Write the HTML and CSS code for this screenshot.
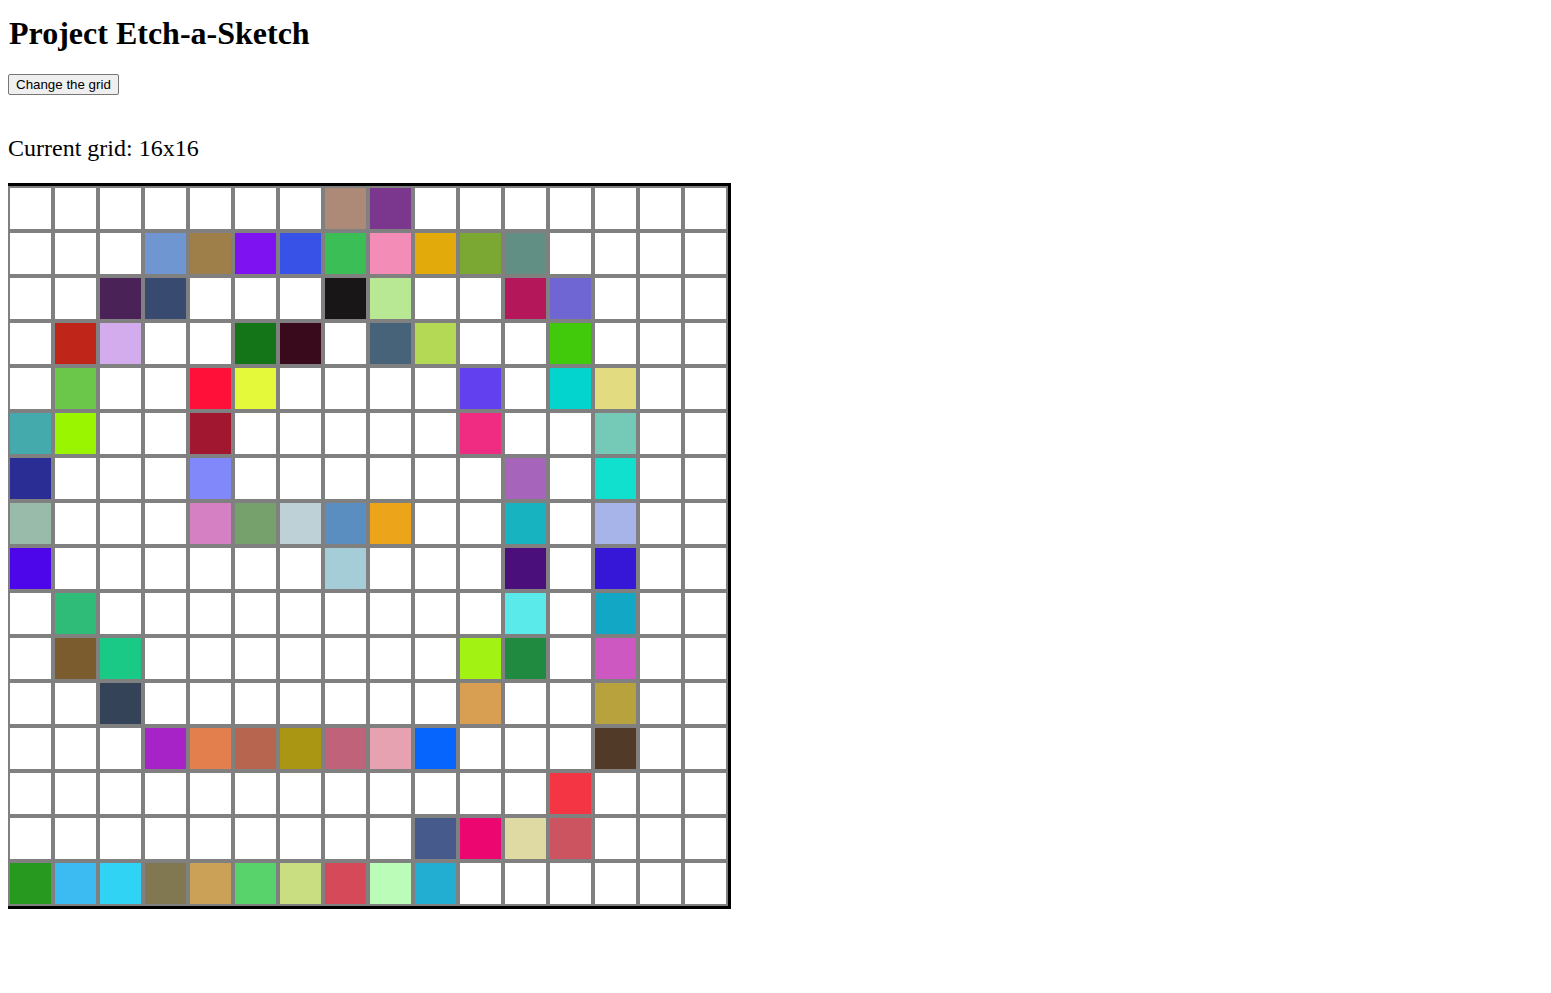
FILE: index.html
```html
<!DOCTYPE html>
<html>
<head>
<meta charset="utf-8">
<title>Etch-a-Sketch</title>
<link rel="stylesheet" href="styles.css">
</head>
<body>
<h1 class="title">Project Etch-a-Sketch</h1>
<div class="controls"><button class="change-btn">Change the grid</button></div>
<p class="status">Current grid: 16x16</p>
<div class="grid">
<div class="cell"></div><div class="cell"></div><div class="cell"></div><div class="cell"></div><div class="cell"></div><div class="cell"></div><div class="cell"></div><div class="cell" style="background:#ad8a78"></div><div class="cell" style="background:#7b378d"></div><div class="cell"></div><div class="cell"></div><div class="cell"></div><div class="cell"></div><div class="cell"></div><div class="cell"></div><div class="cell"></div>
<div class="cell"></div><div class="cell"></div><div class="cell"></div><div class="cell" style="background:#6f96d1"></div><div class="cell" style="background:#9e7f4a"></div><div class="cell" style="background:#7f12f0"></div><div class="cell" style="background:#3852e8"></div><div class="cell" style="background:#3bbe55"></div><div class="cell" style="background:#f48cb8"></div><div class="cell" style="background:#e2ab0b"></div><div class="cell" style="background:#7ba733"></div><div class="cell" style="background:#628f84"></div><div class="cell"></div><div class="cell"></div><div class="cell"></div><div class="cell"></div>
<div class="cell"></div><div class="cell"></div><div class="cell" style="background:#4b2257"></div><div class="cell" style="background:#394a70"></div><div class="cell"></div><div class="cell"></div><div class="cell"></div><div class="cell" style="background:#181617"></div><div class="cell" style="background:#b8e893"></div><div class="cell"></div><div class="cell"></div><div class="cell" style="background:#b5175b"></div><div class="cell" style="background:#6f66d3"></div><div class="cell"></div><div class="cell"></div><div class="cell"></div>
<div class="cell"></div><div class="cell" style="background:#c0251a"></div><div class="cell" style="background:#d3aced"></div><div class="cell"></div><div class="cell"></div><div class="cell" style="background:#137518"></div><div class="cell" style="background:#380a1c"></div><div class="cell"></div><div class="cell" style="background:#46637a"></div><div class="cell" style="background:#b4da55"></div><div class="cell"></div><div class="cell"></div><div class="cell" style="background:#41c90b"></div><div class="cell"></div><div class="cell"></div><div class="cell"></div>
<div class="cell"></div><div class="cell" style="background:#6bc74a"></div><div class="cell"></div><div class="cell"></div><div class="cell" style="background:#fe1039"></div><div class="cell" style="background:#e5f93b"></div><div class="cell"></div><div class="cell"></div><div class="cell"></div><div class="cell"></div><div class="cell" style="background:#6240f0"></div><div class="cell"></div><div class="cell" style="background:#04d4ce"></div><div class="cell" style="background:#e2db7f"></div><div class="cell"></div><div class="cell"></div>
<div class="cell" style="background:#45aaac"></div><div class="cell" style="background:#9af501"></div><div class="cell"></div><div class="cell"></div><div class="cell" style="background:#a0172f"></div><div class="cell"></div><div class="cell"></div><div class="cell"></div><div class="cell"></div><div class="cell"></div><div class="cell" style="background:#f02c82"></div><div class="cell"></div><div class="cell"></div><div class="cell" style="background:#75cab7"></div><div class="cell"></div><div class="cell"></div>
<div class="cell" style="background:#2a2e94"></div><div class="cell"></div><div class="cell"></div><div class="cell"></div><div class="cell" style="background:#8088fa"></div><div class="cell"></div><div class="cell"></div><div class="cell"></div><div class="cell"></div><div class="cell"></div><div class="cell"></div><div class="cell" style="background:#a665ba"></div><div class="cell"></div><div class="cell" style="background:#12e0cf"></div><div class="cell"></div><div class="cell"></div>
<div class="cell" style="background:#99bba9"></div><div class="cell"></div><div class="cell"></div><div class="cell"></div><div class="cell" style="background:#d480c3"></div><div class="cell" style="background:#76a06c"></div><div class="cell" style="background:#bdd1d7"></div><div class="cell" style="background:#5b8ec0"></div><div class="cell" style="background:#eca41b"></div><div class="cell"></div><div class="cell"></div><div class="cell" style="background:#18b3c0"></div><div class="cell"></div><div class="cell" style="background:#a7b4e9"></div><div class="cell"></div><div class="cell"></div>
<div class="cell" style="background:#4d05ea"></div><div class="cell"></div><div class="cell"></div><div class="cell"></div><div class="cell"></div><div class="cell"></div><div class="cell"></div><div class="cell" style="background:#a4cdd7"></div><div class="cell"></div><div class="cell"></div><div class="cell"></div><div class="cell" style="background:#4a0f7b"></div><div class="cell"></div><div class="cell" style="background:#3617d7"></div><div class="cell"></div><div class="cell"></div>
<div class="cell"></div><div class="cell" style="background:#2ebc78"></div><div class="cell"></div><div class="cell"></div><div class="cell"></div><div class="cell"></div><div class="cell"></div><div class="cell"></div><div class="cell"></div><div class="cell"></div><div class="cell"></div><div class="cell" style="background:#5aeaea"></div><div class="cell"></div><div class="cell" style="background:#11a7c5"></div><div class="cell"></div><div class="cell"></div>
<div class="cell"></div><div class="cell" style="background:#7a5c2e"></div><div class="cell" style="background:#1ac986"></div><div class="cell"></div><div class="cell"></div><div class="cell"></div><div class="cell"></div><div class="cell"></div><div class="cell"></div><div class="cell"></div><div class="cell" style="background:#a2f313"></div><div class="cell" style="background:#208a40"></div><div class="cell"></div><div class="cell" style="background:#cd58c1"></div><div class="cell"></div><div class="cell"></div>
<div class="cell"></div><div class="cell"></div><div class="cell" style="background:#344358"></div><div class="cell"></div><div class="cell"></div><div class="cell"></div><div class="cell"></div><div class="cell"></div><div class="cell"></div><div class="cell"></div><div class="cell" style="background:#d89f53"></div><div class="cell"></div><div class="cell"></div><div class="cell" style="background:#b8a23e"></div><div class="cell"></div><div class="cell"></div>
<div class="cell"></div><div class="cell"></div><div class="cell"></div><div class="cell" style="background:#a723c7"></div><div class="cell" style="background:#e37f4c"></div><div class="cell" style="background:#b7654e"></div><div class="cell" style="background:#aa9613"></div><div class="cell" style="background:#c1627b"></div><div class="cell" style="background:#e6a2b1"></div><div class="cell" style="background:#0565fc"></div><div class="cell"></div><div class="cell"></div><div class="cell"></div><div class="cell" style="background:#523a29"></div><div class="cell"></div><div class="cell"></div>
<div class="cell"></div><div class="cell"></div><div class="cell"></div><div class="cell"></div><div class="cell"></div><div class="cell"></div><div class="cell"></div><div class="cell"></div><div class="cell"></div><div class="cell"></div><div class="cell"></div><div class="cell"></div><div class="cell" style="background:#f33544"></div><div class="cell"></div><div class="cell"></div><div class="cell"></div>
<div class="cell"></div><div class="cell"></div><div class="cell"></div><div class="cell"></div><div class="cell"></div><div class="cell"></div><div class="cell"></div><div class="cell"></div><div class="cell"></div><div class="cell" style="background:#475a8c"></div><div class="cell" style="background:#ec066f"></div><div class="cell" style="background:#dfd9a4"></div><div class="cell" style="background:#cb5460"></div><div class="cell"></div><div class="cell"></div><div class="cell"></div>
<div class="cell" style="background:#27991f"></div><div class="cell" style="background:#3bbbf1"></div><div class="cell" style="background:#31d3f5"></div><div class="cell" style="background:#817852"></div><div class="cell" style="background:#cba158"></div><div class="cell" style="background:#58d26a"></div><div class="cell" style="background:#c8de80"></div><div class="cell" style="background:#d64958"></div><div class="cell" style="background:#bbfcb9"></div><div class="cell" style="background:#22add3"></div><div class="cell"></div><div class="cell"></div><div class="cell"></div><div class="cell"></div><div class="cell"></div><div class="cell"></div>
</div>
</body>
</html>
```

FILE: styles.css
```css
html, body {
  background: #ffffff;
}

body {
  margin: 8px;
  font-family: "Liberation Serif", "Times New Roman", serif;
  color: #000000;
}

.title {
  margin: 7px 0 0 1px;
  font-size: 32px;
  font-weight: bold;
  line-height: normal;
}

.controls {
  margin-top: 22px;
  height: 21px;
  display: flex;
}

.change-btn {
  font-family: "Liberation Sans", Arial, sans-serif;
  font-size: 13.333px;
  height: 21px;
  padding: 1px 7px 1px 7px;
  margin: 0;
  border: 1px solid #767676;
  border-radius: 2px;
  background: #efefef;
  color: #000000;
  line-height: normal;
}

.status {
  margin: 40px 0 0 0;
  font-size: 24px;
  line-height: normal;
}

.grid {
  margin: 21px 0 0 -3px;
  width: 720px;
  height: 720px;
  display: grid;
  grid-template-columns: repeat(16, 45px);
  grid-template-rows: repeat(16, 45px);
  border: 3px solid #000000;
}

.cell {
  box-sizing: border-box;
  border: 2px solid #808080;
  background: #ffffff;
}
```
